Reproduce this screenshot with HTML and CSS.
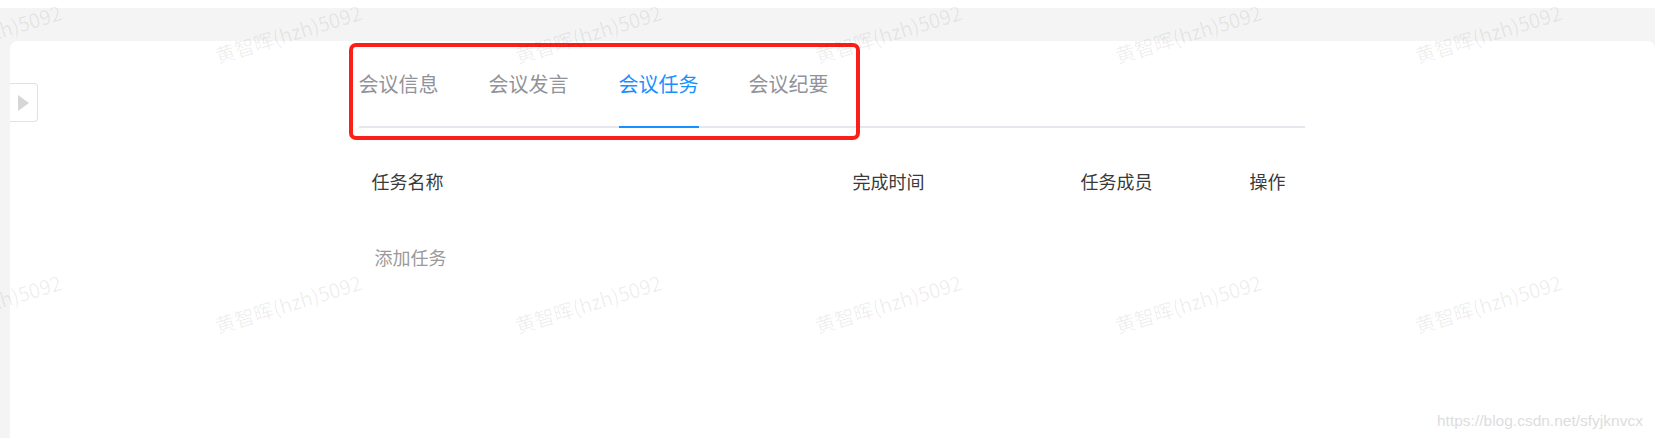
FILE: index.html
```html
<!DOCTYPE html>
<html lang="zh-CN">
<head>
<meta charset="utf-8">
<title>会议任务</title>
<link rel="stylesheet" href="styles.css">
</head>
<body>
<div class="topbar"></div>
<div class="page">
  <div class="card">
    <div class="toggle">
      <svg width="12" height="16" viewBox="0 0 12 16"><path d="M0 0 L11 8 L0 16 Z" fill="#d6d6d6"/></svg>
    </div>
    <div class="content">
      <div class="tabs">
        <div class="tab">会议信息</div>
        <div class="tab">会议发言</div>
        <div class="tab active">会议任务</div>
        <div class="tab">会议纪要</div>
      </div>
      <div class="table">
        <div class="thead">
          <div class="th">任务名称</div>
          <div class="th">完成时间</div>
          <div class="th">任务成员</div>
          <div class="th">操作</div>
        </div>
        <div class="add">添加任务</div>
      </div>
    </div>
  </div>
</div>
<div class="redbox"></div>
<div class="watermarks">
  <div class="wm-grid">
    <span>黄智晖(hzh)5092</span><span>黄智晖(hzh)5092</span><span>黄智晖(hzh)5092</span><span>黄智晖(hzh)5092</span><span>黄智晖(hzh)5092</span><span>黄智晖(hzh)5092</span><span>黄智晖(hzh)5092</span>
    <span>黄智晖(hzh)5092</span><span>黄智晖(hzh)5092</span><span>黄智晖(hzh)5092</span><span>黄智晖(hzh)5092</span><span>黄智晖(hzh)5092</span><span>黄智晖(hzh)5092</span><span>黄智晖(hzh)5092</span>
  </div>
</div>
<div class="csdn">https://blog.csdn.net/sfyjknvcx</div>
</body>
</html>
```
FILE: styles.css
```css
html, body {
  margin: 0;
  padding: 0;
  height: 100%;
  overflow: hidden;
  background: #ffffff;
  font-family: "Noto Sans CJK SC", "Noto Sans", sans-serif;
}

.topbar {
  height: 8px;
  background: #ffffff;
}

.page {
  background: #f4f4f4;
  padding: 33px 0 0 10px;
  height: calc(100% - 8px);
  box-sizing: border-box;
}

.card {
  position: relative;
  background: #ffffff;
  border-radius: 8px 8px 0 0;
  height: 100%;
}

.toggle {
  position: absolute;
  left: 0;
  top: 42px;
  width: 28px;
  height: 39px;
  box-sizing: border-box;
  border: 1px solid #e2e2e2;
  border-left: none;
  border-radius: 0 4px 4px 0;
  display: flex;
  align-items: center;
  justify-content: center;
}

.content {
  width: 946px;
  margin: 0 auto;
  transform: translateX(-1px);
}

.tabs {
  display: flex;
  gap: 50px;
  border-bottom: 2px solid #e4e7ed;
}

.tab {
  font-size: 20px;
  line-height: 28px;
  padding: 29px 0 28px;
  color: #909399;
  margin-bottom: -2px;
  border-bottom: 2px solid transparent;
}

.tab.active {
  color: #1890ff;
  border-bottom-color: #1890ff;
}

.table {
  font-size: 18px;
}

.thead {
  display: grid;
  grid-template-columns: 481px 228px 169px 68px;
  padding-top: 40px;
}

.th {
  line-height: 26px;
  padding-left: 13px;
  color: #3a3a3a;
}

.add {
  margin-top: 50px;
  padding-left: 16px;
  line-height: 26px;
  color: #9a9a9a;
}

.redbox {
  position: absolute;
  left: 349px;
  top: 43px;
  width: 511px;
  height: 97px;
  box-sizing: border-box;
  border: 4px solid #fb1f1a;
  border-radius: 7px;
}

.watermarks {
  position: absolute;
  inset: 0;
  overflow: hidden;
  pointer-events: none;
}

.wm-grid {
  position: absolute;
  left: -162px;
  top: -102px;
  display: grid;
  grid-template-columns: repeat(7, 300px);
  grid-auto-rows: 270px;
}

.wm-grid span {
  display: flex;
  align-items: center;
  justify-content: center;
  font-size: 20px;
  color: rgba(0, 0, 0, 0.07);
  white-space: nowrap;
  transform: rotate(-17deg);
}

.csdn {
  position: absolute;
  left: 1437px;
  top: 411px;
  font-family: "Liberation Sans", Arial, sans-serif;
  font-size: 15.5px;
  line-height: 20px;
  color: #dddddd;
}
```
